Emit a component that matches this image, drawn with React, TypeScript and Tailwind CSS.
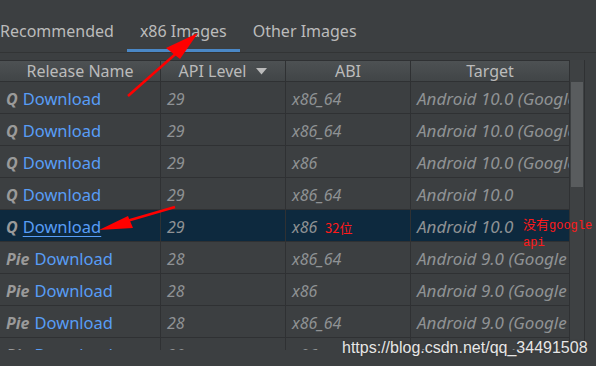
import React from "react";

type Row = {
  code: string;
  api: string;
  abi: string;
  target: string;
  selected?: boolean;
};

const ROWS: Row[] = [
  { code: "Q", api: "29", abi: "x86_64", target: "Android 10.0 (Google APIs)" },
  { code: "Q", api: "29", abi: "x86_64", target: "Android 10.0 (Google Play)" },
  { code: "Q", api: "29", abi: "x86", target: "Android 10.0 (Google Play)" },
  { code: "Q", api: "29", abi: "x86_64", target: "Android 10.0" },
  { code: "Q", api: "29", abi: "x86", target: "Android 10.0", selected: true },
  { code: "Pie", api: "28", abi: "x86_64", target: "Android 9.0 (Google Play)" },
  { code: "Pie", api: "28", abi: "x86", target: "Android 9.0 (Google APIs)" },
  { code: "Pie", api: "28", abi: "x86_64", target: "Android 9.0 (Google APIs)" },
  { code: "Pie", api: "28", abi: "x86", target: "Android 9.0 (Google Play)" },
];

const TABS = ["Recommended", "x86 Images", "Other Images"];

export default function App() {
  return (
    <div
      className="relative w-[596px] h-[366px] overflow-hidden bg-[#3c3f41] text-[#bbbbbb]"
      style={{ fontFamily: '"Noto Sans", "Open Sans", sans-serif' }}
    >
      {/* tabs */}
      <div className="flex h-[53px] items-end -ml-[13px] border-b border-[#323435]">
        {TABS.map((t, i) => (
          <div key={t} className="h-full flex flex-col justify-end px-[13px]">
            <div className="text-[16px] leading-none pb-[10px]">{t}</div>
            <div className={`h-[3px] -mx-[13px] ${i === 1 ? "bg-[#4a88c7]" : "bg-transparent"}`} />
          </div>
        ))}
      </div>

      {/* table */}
      <div className="mt-[7px] flex h-[290px] w-[585px]">
        <div className="w-[569px] overflow-hidden">
          <div className="flex h-[22px] border-y border-[#2f3133] bg-gradient-to-b from-[#4d5153] to-[#414547] text-[16px] leading-[20px]">
            <div className="w-[160px] shrink-0 text-center">Release Name</div>
            <div className="w-[125px] shrink-0 border-l border-[#2f3133] flex items-center justify-center gap-[10px]">
              <span>API Level</span>
              <svg width="11" height="7" viewBox="0 0 11 7">
                <path d="M0 0 H11 L5.5 6.5 Z" fill="#bbbbbb" />
              </svg>
            </div>
            <div className="w-[125px] shrink-0 border-l border-[#2f3133] text-center">ABI</div>
            <div className="w-[159px] shrink-0 border-l border-[#2f3133] text-center">Target</div>
          </div>
          {ROWS.map((r, i) => (
            <div
              key={i}
              className={`flex h-[32px] overflow-hidden border-b border-[#2f3133] text-[16px] leading-[34px] ${
                r.selected ? "bg-[#0d293e]" : ""
              }`}
            >
              <div className="w-[160px] shrink-0 pl-[6px] whitespace-nowrap overflow-hidden">
                <span className="font-bold italic text-[#9a9a9a]">{r.code}</span>
                <span
                  className={`ml-[5px] text-[#589df6] text-[16.5px] ${
                    r.selected ? "underline underline-offset-[3px]" : ""
                  }`}
                >
                  Download
                </span>
              </div>
              <div className="w-[125px] shrink-0 border-l border-[#2f3133] pl-[6px] italic text-[#8f9294]">
                {r.api}
              </div>
              <div className="w-[125px] shrink-0 border-l border-[#2f3133] pl-[6px] italic text-[#8f9294]">
                {r.abi}
              </div>
              <div className="w-[159px] shrink-0 border-l border-[#2f3133] pl-[6px] italic text-[#8f9294] text-[17px] whitespace-nowrap overflow-hidden">
                {r.target}
              </div>
            </div>
          ))}
        </div>
        {/* scrollbar */}
        <div className="w-[16px] border-x border-[#2f3133] bg-[#3e4143] px-[1px] pt-[22px]">
          <div className="h-[105px] bg-[#595c5e]" />
        </div>
      </div>

      {/* annotations */}
      <svg className="absolute inset-0 pointer-events-none" width="596" height="366">
        <line x1="128" y1="96" x2="180" y2="50" stroke="#ff0000" strokeWidth="2.5" />
        <polygon points="198,33 166,48 180,59" fill="#ff0000" />
        <line x1="175" y1="207" x2="120" y2="223" stroke="#ff0000" strokeWidth="2.5" />
        <polygon points="99,230 128,216 133,228" fill="#ff0000" />
      </svg>
      <div
        className="absolute left-[325px] top-[221px] text-[13px] leading-none text-[#ff1a1a]"
        style={{ fontFamily: '"Noto Sans CJK SC", sans-serif' }}
      >
        32位
      </div>
      <div className="absolute left-[523px] top-[216px] text-[13px] leading-[15px] text-[#ff1a1a] whitespace-nowrap">
        <span style={{ fontFamily: '"Noto Sans CJK SC", sans-serif' }}>没有</span>
        <span style={{ fontFamily: '"Liberation Mono", monospace' }} className="text-[12px]">google</span>
        <br />
        <span style={{ fontFamily: '"Liberation Mono", monospace' }} className="text-[12px]">api</span>
      </div>
      <div
        className="absolute left-[342px] top-[336px] text-[16px] text-[#e6e6e6] whitespace-nowrap"
        style={{ fontFamily: '"Liberation Sans", Arial, sans-serif', textShadow: "0 0 2px #333" }}
      >
        https://blog.csdn.net/qq_34491508
      </div>
    </div>
  );
}
